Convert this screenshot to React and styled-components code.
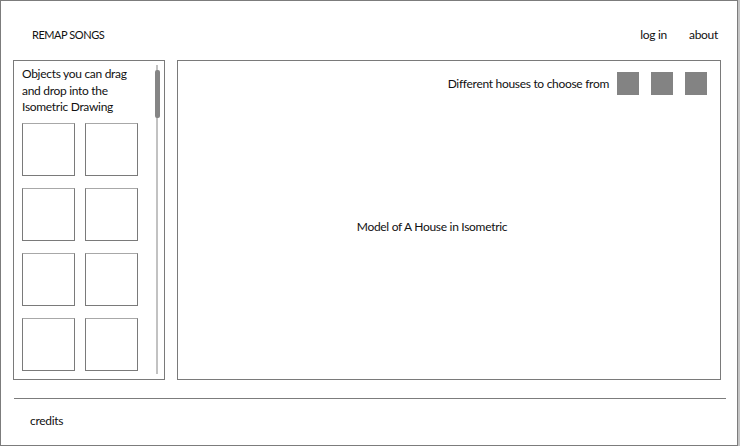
import React from 'react';
import styled, { createGlobalStyle } from 'styled-components';

const GlobalStyle = createGlobalStyle`
  html, body {
    margin: 0;
    padding: 0;
    background: #c4c4c4;
  }
  body {
    font-family: Lato, "Noto Sans", sans-serif;
    color: #111;
    letter-spacing: -0.3px;
  }
`;

const Frame = styled.div`
  box-sizing: border-box;
  width: 738px;
  height: 446px;
  background: #fff;
  border: 1px solid #7c7c7c;
  display: flex;
  flex-direction: column;
  padding: 0 16px 0 12px;
`;

const Header = styled.header`
  height: 59px;
  box-sizing: border-box;
  padding: 8px 3px 0 19px;
  display: flex;
  align-items: center;
  justify-content: space-between;
  font-size: 12px;
`;

const Brand = styled.div`
  font-size: 11px;
  letter-spacing: -0.45px;
`;

const Nav = styled.nav`
  display: flex;
  gap: 22px;
`;

const NavLink = styled.a`
  color: #111;
  text-decoration: none;
`;

const Body = styled.div`
  display: flex;
  gap: 12px;
  height: 320px;
`;

const Sidebar = styled.aside`
  box-sizing: border-box;
  width: 152px;
  height: 100%;
  border: 1px solid #7a7a7a;
  display: flex;
  overflow: hidden;
`;

const SideContent = styled.div`
  flex: 1;
  padding: 5px 0 0 8px;
  overflow: hidden;
`;

const SideTitle = styled.p`
  margin: 0 0 7px;
  font-size: 12px;
  line-height: 16.5px;
`;

const ItemGrid = styled.div`
  display: grid;
  grid-template-columns: 53px 53px;
  column-gap: 10px;
  row-gap: 12px;
`;

const Item = styled.div`
  box-sizing: border-box;
  width: 53px;
  height: 53px;
  border: 1px solid #7a7a7a;
  border-top-color: #a8a8a8;
`;

const ScrollTrack = styled.div`
  position: relative;
  width: 5px;
  margin: 4px 4px 5px 0;
  &::before {
    content: '';
    position: absolute;
    left: 1px;
    top: 0;
    bottom: 0;
    width: 2px;
    background: #c2c2c2;
  }
`;

const ScrollThumb = styled.div`
  position: absolute;
  left: 0;
  top: 5px;
  width: 5px;
  height: 48px;
  border-radius: 2px;
  background: #858585;
`;

const Stage = styled.main`
  box-sizing: border-box;
  flex: 1;
  height: 100%;
  border: 1px solid #7a7a7a;
  display: flex;
  flex-direction: column;
`;

const HouseBar = styled.div`
  display: flex;
  justify-content: flex-end;
  align-items: center;
  gap: 12px;
  padding: 11px 13px 0 0;
  font-size: 12px;
`;

const HouseLabel = styled.span`
  margin-right: -4px;
`;

const HouseSwatch = styled.div`
  width: 22px;
  height: 23px;
  background: #838383;
`;

const Canvas = styled.div`
  flex: 1;
  display: flex;
  align-items: center;
  justify-content: center;
  padding: 0 34px 22px 0;
  font-size: 12px;
`;

const Footer = styled.footer`
  margin: 18px -5px 0 1px;
  border-top: 1px solid #7c7c7c;
  padding: 14px 0 0 16px;
  font-size: 12px;
`;

const items = Array.from({ length: 10 });

export default function App() {
  return (
    <>
      <GlobalStyle />
      <Frame>
        <Header>
          <Brand>REMAP SONGS</Brand>
          <Nav>
            <NavLink href="#">log in</NavLink>
            <NavLink href="#">about</NavLink>
          </Nav>
        </Header>
        <Body>
          <Sidebar>
            <SideContent>
              <SideTitle>
                Objects you can drag<br />and drop into the<br />Isometric Drawing
              </SideTitle>
              <ItemGrid>
                {items.map((_, i) => (
                  <Item key={i} />
                ))}
              </ItemGrid>
            </SideContent>
            <ScrollTrack>
              <ScrollThumb />
            </ScrollTrack>
          </Sidebar>
          <Stage>
            <HouseBar>
              <HouseLabel>Different houses to choose from</HouseLabel>
              <HouseSwatch />
              <HouseSwatch />
              <HouseSwatch />
            </HouseBar>
            <Canvas>Model of A House in Isometric</Canvas>
          </Stage>
        </Body>
        <Footer>credits</Footer>
      </Frame>
    </>
  );
}
